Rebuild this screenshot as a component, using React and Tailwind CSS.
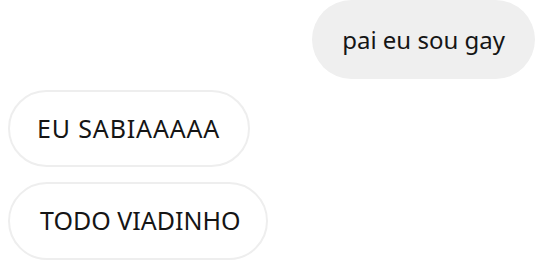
export default function App() {
  return (
    <div className="w-[560px] h-[260px] overflow-hidden bg-white font-['Noto_Sans',sans-serif] text-[#151515]">
      <div className="flex flex-col">
        <div className="flex justify-end pr-[25px]">
          <div className="h-[79px] px-[30px] flex items-center rounded-full bg-[#efefef] text-[24px]">
            pai eu sou gay
          </div>
        </div>
        <div className="flex mt-[11px] pl-[8px]">
          <div className="h-[77px] pl-[27px] pr-[28px] flex items-center rounded-full border-2 border-[#eeeeee] text-[25px] tracking-[0.85px]">
            EU SABIAAAAA
          </div>
        </div>
        <div className="flex mt-[15px] pl-[8px]">
          <div className="h-[78px] pl-[30px] pr-[26px] flex items-center rounded-full border-2 border-[#eeeeee] text-[25px]">
            TODO VIADINHO
          </div>
        </div>
      </div>
    </div>
  );
}
